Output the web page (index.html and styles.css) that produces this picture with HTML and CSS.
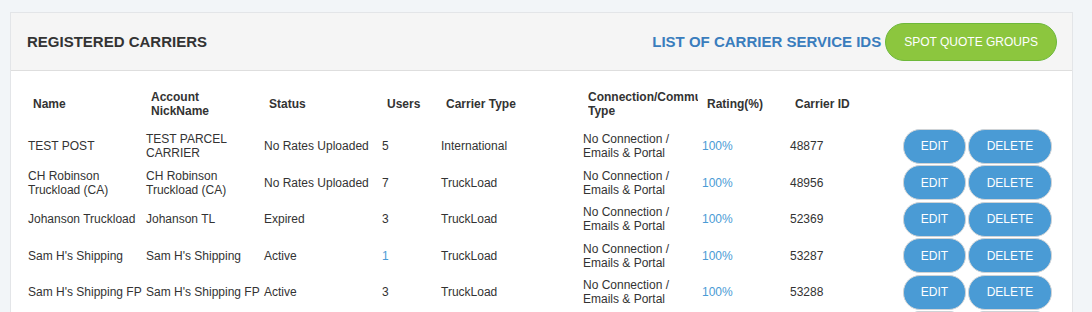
FILE: index.html
```html
<!DOCTYPE html>
<html lang="en">
<head>
    <meta charset="UTF-8">
    <title>Registered Carriers</title>
    <link rel="stylesheet" href="styles.css">
</head>
<body>
<div class="panel">
    <div class="panel-heading">
        <h2 class="title">REGISTERED CARRIERS</h2>
        <div class="heading-actions">
            <a class="service-link" href="#">LIST OF CARRIER SERVICE IDS</a>
            <button class="btn-green">SPOT QUOTE GROUPS</button>
        </div>
    </div>
    <div class="panel-body">
        <table class="carriers">
            <colgroup>
                <col style="width: 118px">
                <col style="width: 118px">
                <col style="width: 118px">
                <col style="width: 59px">
                <col style="width: 142px">
                <col style="width: 119px">
                <col style="width: 88px">
                <col style="width: 113px">
                <col>
            </colgroup>
            <thead>
            <tr>
                <th>Name</th>
                <th>Account<br>NickName</th>
                <th>Status</th>
                <th>Users</th>
                <th>Carrier Type</th>
                <th><div class="clip">Connection/Communication<br>Type</div></th>
                <th>Rating(%)</th>
                <th>Carrier ID</th>
                <th></th>
            </tr>
            </thead>
            <tbody>
            <tr>
                <td>TEST POST</td>
                <td>TEST PARCEL<br>CARRIER</td>
                <td>No Rates Uploaded</td>
                <td>5</td>
                <td>International</td>
                <td>No Connection /<br>Emails &amp; Portal</td>
                <td class="link">100%</td>
                <td>48877</td>
                <td><button class="btn-blue edit">EDIT</button><button class="btn-blue delete">DELETE</button></td>
            </tr>
            <tr>
                <td>CH Robinson<br>Truckload (CA)</td>
                <td>CH Robinson<br>Truckload (CA)</td>
                <td>No Rates Uploaded</td>
                <td>7</td>
                <td>TruckLoad</td>
                <td>No Connection /<br>Emails &amp; Portal</td>
                <td class="link">100%</td>
                <td>48956</td>
                <td><button class="btn-blue edit">EDIT</button><button class="btn-blue delete">DELETE</button></td>
            </tr>
            <tr>
                <td>Johanson Truckload</td>
                <td>Johanson TL</td>
                <td>Expired</td>
                <td>3</td>
                <td>TruckLoad</td>
                <td>No Connection /<br>Emails &amp; Portal</td>
                <td class="link">100%</td>
                <td>52369</td>
                <td><button class="btn-blue edit">EDIT</button><button class="btn-blue delete">DELETE</button></td>
            </tr>
            <tr>
                <td>Sam H's Shipping</td>
                <td>Sam H's Shipping</td>
                <td>Active</td>
                <td class="link">1</td>
                <td>TruckLoad</td>
                <td>No Connection /<br>Emails &amp; Portal</td>
                <td class="link">100%</td>
                <td>53287</td>
                <td><button class="btn-blue edit">EDIT</button><button class="btn-blue delete">DELETE</button></td>
            </tr>
            <tr>
                <td>Sam H's Shipping FP</td>
                <td>Sam H's Shipping FP</td>
                <td>Active</td>
                <td>3</td>
                <td>TruckLoad</td>
                <td>No Connection /<br>Emails &amp; Portal</td>
                <td class="link">100%</td>
                <td>53288</td>
                <td><button class="btn-blue edit">EDIT</button><button class="btn-blue delete">DELETE</button></td>
            </tr>
            <tr>
                <td>Sam H's Shipping LTL</td>
                <td>Sam H's Shipping LTL</td>
                <td>Active</td>
                <td>2</td>
                <td>LTL</td>
                <td>No Connection /<br>Emails &amp; Portal</td>
                <td class="link">100%</td>
                <td>53289</td>
                <td><button class="btn-blue edit">EDIT</button><button class="btn-blue delete">DELETE</button></td>
            </tr>
            </tbody>
        </table>
    </div>
</div>
</body>
</html>
```

FILE: styles.css
```css
body {
    margin: 0;
    padding: 12px 0 0 10px;

    font-family: "Liberation Sans", Arial, sans-serif;
    font-size: 12px;
    color: #333;

    background-color: #f2f5f8;
    overflow: hidden;
}

.panel {
    width: 1061px;

    border: 1px solid #e3e5e8;
    background-color: #fff;
}

.panel-heading {
    display: flex;
    align-items: center;
    justify-content: space-between;

    height: 57px;
    padding: 0 15px 0 16px;

    border-bottom: 1px solid #dedede;
    background-color: #f5f5f5;
}

.title {
    margin: 0;

    font-size: 15px;
    font-weight: bold;
    color: #333;
}

.heading-actions {
    display: flex;
    align-items: center;
    gap: 4px;
}

.service-link {
    font-size: 15px;
    font-weight: bold;
    color: #3a7dbd;
    text-decoration: none;
}

.btn-green {
    height: 38px;
    padding: 0 18px;

    font-family: inherit;
    font-size: 12px;
    color: #fff;

    border: 1px solid #6db83a;
    border-radius: 19px;
    background-color: #8cc63e;
}

.panel-body {
    padding: 8px 15px 0 15px;
}

.carriers {
    table-layout: fixed;
    border-collapse: collapse;
    width: 1031px;
}

.carriers th {
    height: 49px;
    padding: 0 2px 0 7px;

    font-weight: bold;
    text-align: left;
    line-height: 14px;
    vertical-align: middle;
}

.clip {
    overflow: hidden;
    white-space: nowrap;
}

.carriers td {
    height: 36.5px;
    padding: 0 2px;

    line-height: 14px;
    vertical-align: middle;
    white-space: nowrap;
}

.carriers td.link {
    color: #4a9bd5;
}

.btn-blue {
    height: 35px;
    margin-right: 2px;

    font-family: inherit;
    font-size: 12px;
    color: #fff;

    border: 1px solid #cfd3d6;
    border-radius: 17px;
    background-color: #4a9bd5;
}

.edit {
    width: 63px;
}

.delete {
    width: 84px;
}
```
